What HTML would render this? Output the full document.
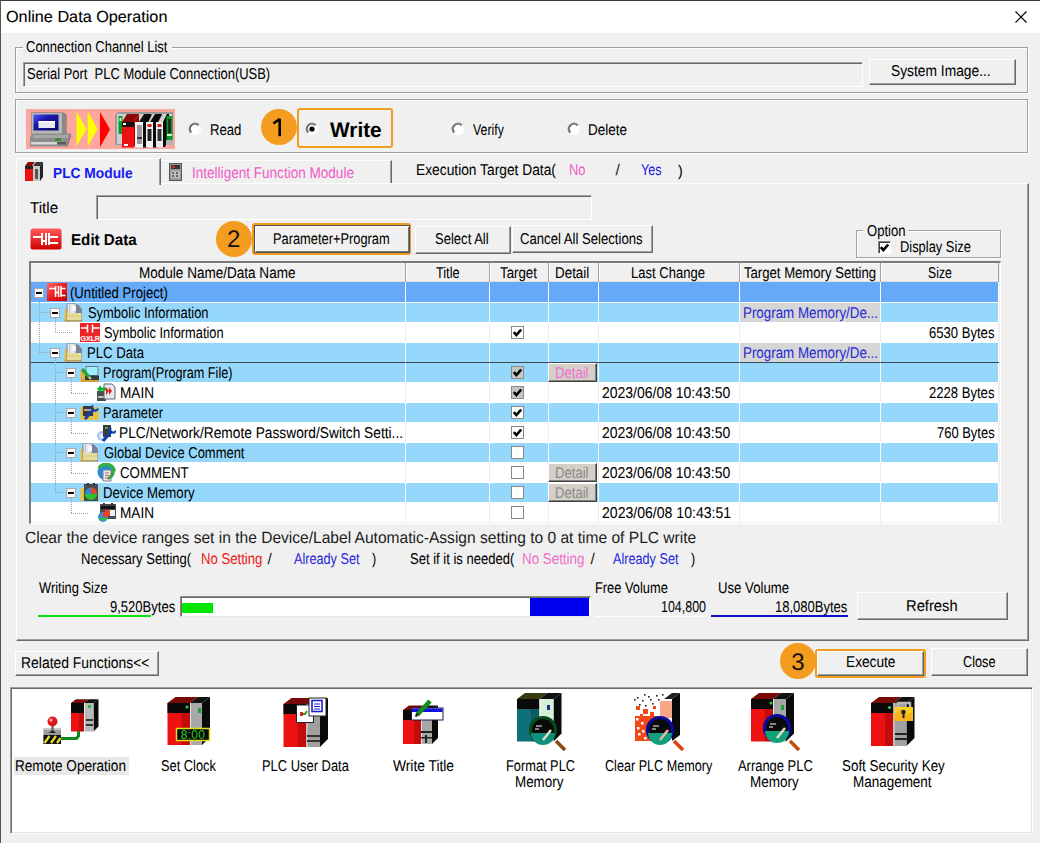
<!DOCTYPE html>
<html><head><meta charset="utf-8">
<style>
*{box-sizing:border-box;margin:0;padding:0}
html,body{width:1040px;height:843px;overflow:hidden;background:#f0f0f0;font-family:"Liberation Sans",sans-serif;color:#000;position:relative}
.a{position:absolute}
.t{position:absolute;white-space:nowrap;text-rendering:geometricPrecision;-webkit-text-stroke:0.05px currentColor}
.grp{position:absolute;border:1px solid #a0a0a0;box-shadow:inset 1px 1px 0 #fff,1px 1px 0 #fff}
.btn{position:absolute;background:#f0f0f0;border-top:1px solid #fff;border-left:1px solid #fff;border-right:1px solid #696969;border-bottom:1px solid #696969;box-shadow:inset -1px -1px 0 #a0a0a0}
.defbtn{position:absolute;background:#f0f0f0;border:1px solid #4a4e55;box-shadow:inset 1px 1px 0 #fff,inset -1px -1px 0 #7a7a7a}
.sunk{position:absolute;border-top:1px solid #a0a0a0;border-left:1px solid #a0a0a0;border-right:1px solid #fff;border-bottom:1px solid #fff;box-shadow:inset 1px 1px 0 #696969}
.circ{position:absolute;width:36px;height:36px;border-radius:50%;background:#f39c1f}
.radio{position:absolute;width:13px;height:13px}
.cb{position:absolute;width:13px;height:13px;border:1px solid #8f8f8f;background:#fff}
.row{position:absolute;left:31px;width:968px;height:20px}
.vl{position:absolute;width:1px}
.dv{position:absolute;width:1px;background-image:linear-gradient(#a0a0a0 50%,transparent 50%);background-size:1px 2px}
.dh{position:absolute;height:1px;background-image:linear-gradient(90deg,#a0a0a0 50%,transparent 50%);background-size:2px 1px}
.mb{position:absolute;width:10px;height:10px;border:1px solid #a8a8a8;background:#fff}
.mb:after{content:"";position:absolute;left:1px;top:3px;width:6px;height:2px;background:#000}
.det{position:absolute;width:48px;height:18px;background:#d4d0c8;border-top:1px solid #fff;border-left:1px solid #fff;border-right:1px solid #404040;border-bottom:1px solid #404040;box-shadow:inset -1px -1px 0 #808080}
</style></head><body>
<div class="a" style="left:0;top:0;width:1040px;height:33px;background:#fff"></div>
<div class="a" style="left:0;top:0;width:1040px;height:1px;background:#3a3a3a"></div>
<div class="a" style="left:0;top:0;width:1px;height:843px;background:#555"></div>
<div class="t" style="left:6.00px;top:9.66px;font-size:16px;line-height:16px;color:#000;transform:scaleX(1.0139);transform-origin:0 0;-webkit-text-stroke:0.1px currentColor;">Online Data Operation</div>
<svg class="a" style="left:1014px;top:10px" width="14" height="14"><path d="M1.5 1.5L12.5 12.5M12.5 1.5L1.5 12.5" stroke="#000" stroke-width="1.2"/></svg>
<div class="grp" style="left:15px;top:47px;width:1013px;height:46px"></div>
<div class="a" style="left:23px;top:40px;width:149px;height:14px;background:#f0f0f0"></div>
<div class="t" style="left:26.00px;top:40.49px;font-size:15.6px;line-height:15.6px;color:#000;transform:scaleX(0.8325);transform-origin:0 0;">Connection Channel List</div>
<div class="sunk" style="left:23px;top:62px;width:840px;height:25px"></div>
<div class="t" style="left:27.00px;top:67.09px;font-size:15.6px;line-height:15.6px;color:#000;transform:scaleX(0.8301);transform-origin:0 0;">Serial Port&nbsp; PLC Module Connection(USB)</div>
<div class="btn" style="left:869px;top:59px;width:147px;height:26px"></div>
<div class="t" style="left:891.45px;top:64.49px;font-size:15.6px;line-height:15.6px;color:#000;transform:scaleX(0.8848);transform-origin:0 0;">System Image...</div>
<div class="grp" style="left:15px;top:99px;width:1013px;height:54px"></div>
<svg class="a" style="left:26px;top:109px" width="149" height="40" viewBox="0 0 149 40">
<defs><linearGradient id="scr" x1="0" y1="0" x2="1" y2="1"><stop offset="0" stop-color="#5a5aff"/><stop offset="0.35" stop-color="#1a1ab0"/><stop offset="1" stop-color="#0a0a60"/></linearGradient></defs>
<rect x="0" y="0" width="149" height="40" fill="#fba69e"/>
<path d="M5.5 3.5h31l4 2v20h-35z" fill="#6a6a6a"/>
<path d="M6 4h30v21h-30z" fill="#b8b8b8"/><path d="M36 4l4 2v19h-4z" fill="#8a8a8a"/>
<path d="M7.5 5.5h25v16h-25z" fill="url(#scr)"/>
<path d="M12.5 12h16.5v7h-16.5z" fill="#e8e8f0"/><path d="M12.5 12h16.5v1.5h-16.5z" fill="#fff"/>
<path d="M4 28l3-3.5h38l-4 13h-37z" fill="#8c8c8c"/>
<path d="M7 26h36l-1 3h-35z" fill="#a8a8a8"/>
<path d="M41 37.5l4-13v2l-3.5 11z" fill="#4a4a4a"/>
<path d="M5 33h26v2.5h-26z" fill="#d8d8d8"/><path d="M31 33h9v2.5h-9z" fill="#5a5a5a"/>
<path d="M29 29h6v3h-6z" fill="#3a8a3a"/>
<path d="M50.5 2.5l10 17.5l-10 17.5z" fill="#ffff00"/>
<path d="M61.7 2.5l10 17.5l-10 17.5z" fill="#ffff00"/>
<path d="M74 3l10 17.5l-10 17.5z" fill="#ff0000"/>
<path d="M89 6l3-3h55v33h-58z" fill="#9a9a9a"/><path d="M91 5h55v30h-55z" fill="#d0d0d0"/>
<path d="M92.5 7h4v18h-4z" fill="#0a9a2a"/><path d="M93.5 9h2v3h-2z" fill="#c0ffc0"/>
<path d="M96 13l5-8h12l-5 8z" fill="#8a0a0a"/>
<path d="M96 13h12v25.5h-12z" fill="#ee1111"/><path d="M96 13h12v5h-12z" fill="#111"/><path d="M97 14h3v2h-3z" fill="#fff"/>
<path d="M98 35h4v2h-4z" fill="#fff"/>
<path d="M108 13l5-8v25l-5 8z" fill="#a00000"/>
<path d="M109 13h8v25.5h-8z" fill="#f4f4f4"/><path d="M111 16h5v19h-5z" fill="#9a9a9a"/><path d="M111 28h5v2h-5z" fill="#333"/>
<path d="M113 13l5-8h7l-5 8z" fill="#111"/>
<path d="M117 38.5v-25l4-8h5l-4 8v25z" fill="#0a0a0a"/>
<path d="M120 13h7v25.5h-7z" fill="#f0f0f0"/><path d="M121.5 15h4v3h-4z" fill="#d02020"/><path d="M121.5 20h4v12h-4z" fill="#222"/>
<path d="M124 13l5-8h7l-5 8z" fill="#111"/>
<path d="M127 38.5v-25l4-8h5l-4 8v25z" fill="#0a0a0a"/>
<path d="M130 13h7v25.5h-7z" fill="#ececec"/><path d="M131.5 15h4v3h-4z" fill="#d02020"/><path d="M131.5 20h4v12h-4z" fill="#333"/>
<path d="M137 38v-25l4-8h2v25l-4 8z" fill="#0a0a0a"/>
<path d="M140.5 7h6v24h-6z" fill="#0a9a2a"/><path d="M142 10h3v14h-3z" fill="#2a2a2a"/><path d="M141 25h5v2h-5z" fill="#c0ffc0"/>
<path d="M140 31h7v5h-7z" fill="#b0b0b0"/>
</svg>
<svg class="a" style="left:188px;top:122px" width="14" height="14" viewBox="0 0 14 14"><circle cx="7" cy="7" r="6" fill="#fff"/><path d="M2.9 11.1A5.8 5.8 0 0 1 11.1 2.9" stroke="#8a8a8a" stroke-width="1.4" fill="none"/><path d="M3.6 10.2A4.6 4.6 0 0 1 10.2 3.6" stroke="#505050" stroke-width="1.1" fill="none"/></svg>
<div class="t" style="left:210.16px;top:122.59px;font-size:15.6px;line-height:15.6px;color:#000;transform:scaleX(0.8425);transform-origin:0 0;">Read</div>
<div class="circ" style="left:261px;top:109px"></div>
<svg class="a" style="left:270px;top:115px" width="20" height="25" viewBox="270 115 20 25"><path d="M279.7 118.8V136.2" stroke="#000" stroke-width="2.6"/><path d="M273.4 123.4L279.7 119" stroke="#000" stroke-width="2.4"/></svg>
<div class="a" style="left:297px;top:108px;width:96px;height:40px;border:2px solid #f39c1f;border-radius:3px"></div>
<svg class="a" style="left:305px;top:122px" width="14" height="14" viewBox="0 0 14 14"><circle cx="7" cy="7" r="6" fill="#fff"/><path d="M2.9 11.1A5.8 5.8 0 0 1 11.1 2.9" stroke="#8a8a8a" stroke-width="1.4" fill="none"/><path d="M3.6 10.2A4.6 4.6 0 0 1 10.2 3.6" stroke="#505050" stroke-width="1.1" fill="none"/><circle cx="7" cy="7" r="2.6" fill="#000"/></svg>
<div class="t" style="left:330.00px;top:120.22px;font-size:21px;line-height:21px;color:#000;font-weight:bold;transform:scaleX(0.9914);transform-origin:0 0;">Write</div>
<svg class="a" style="left:451px;top:122px" width="14" height="14" viewBox="0 0 14 14"><circle cx="7" cy="7" r="6" fill="#fff"/><path d="M2.9 11.1A5.8 5.8 0 0 1 11.1 2.9" stroke="#8a8a8a" stroke-width="1.4" fill="none"/><path d="M3.6 10.2A4.6 4.6 0 0 1 10.2 3.6" stroke="#505050" stroke-width="1.1" fill="none"/></svg>
<div class="t" style="left:472.50px;top:122.99px;font-size:15.6px;line-height:15.6px;color:#000;transform:scaleX(0.7908);transform-origin:0 0;">Verify</div>
<svg class="a" style="left:567px;top:122px" width="14" height="14" viewBox="0 0 14 14"><circle cx="7" cy="7" r="6" fill="#fff"/><path d="M2.9 11.1A5.8 5.8 0 0 1 11.1 2.9" stroke="#8a8a8a" stroke-width="1.4" fill="none"/><path d="M3.6 10.2A4.6 4.6 0 0 1 10.2 3.6" stroke="#505050" stroke-width="1.1" fill="none"/></svg>
<div class="t" style="left:588.14px;top:122.99px;font-size:15.6px;line-height:15.6px;color:#000;transform:scaleX(0.8640);transform-origin:0 0;">Delete</div>
<div class="a" style="left:16px;top:183px;width:1013px;height:458px;border-top:1px solid #fff;border-left:1px solid #fff;border-right:1px solid #696969;border-bottom:1px solid #696969;box-shadow:inset -1px -1px 0 #a0a0a0"></div>
<div class="a" style="left:16px;top:158px;width:145px;height:27px;background:#f0f0f0;border-top:1px solid #fff;border-left:1px solid #fff;border-right:1px solid #696969;box-shadow:inset -1px 0 0 #a0a0a0"></div>
<div class="a" style="left:161px;top:160px;width:231px;height:23px;background:#f0f0f0;border-top:1px solid #fff;border-right:1px solid #696969;box-shadow:inset -1px 0 0 #a0a0a0"></div>
<svg class="a" style="left:24px;top:161px" width="20" height="21" viewBox="0 0 20 21">
<path d="M1 5l3-4h7l-3 4z" fill="#8a0a0a"/><path d="M1 5h8v15h-8z" fill="#ee1111"/><path d="M1 5h8v3h-8z" fill="#222"/>
<path d="M9 5l3-4h7l-3 4z" fill="#333"/><path d="M9 5h8v15h-8z" fill="#c8c8c8"/><path d="M16 5l3-4v15l-3 4z" fill="#222"/>
<path d="M11 8h3v10h-3z" fill="#555"/>
</svg>
<div class="t" style="left:53.00px;top:166.63px;font-size:14.5px;line-height:14.5px;color:#1a1aee;font-weight:bold;transform:scaleX(0.9497);transform-origin:0 0;">PLC Module</div>
<svg class="a" style="left:168px;top:162px" width="16" height="20" viewBox="0 0 16 20">
<path d="M1 1h13v18h-13z" fill="#555"/><path d="M2 2h11v16h-11z" fill="#9a9a9a"/><path d="M3 3h9v4h-9z" fill="#333"/><path d="M4 4h3v2h-3z" fill="#c03030"/>
<path d="M3 9h9v7h-9z" fill="#bdbdbd"/><path d="M4 10h2v2h-2zM8 10h2v2h-2zM4 13h2v2h-2zM8 13h2v2h-2z" fill="#666"/>
</svg>
<div class="t" style="left:192.13px;top:166.49px;font-size:15.6px;line-height:15.6px;color:#f060c8;transform:scaleX(0.8690);transform-origin:0 0;">Intelligent Function Module</div>
<div class="t" style="left:416.12px;top:163.39px;font-size:15.6px;line-height:15.6px;color:#000;transform:scaleX(0.8837);transform-origin:0 0;">Execution Target Data(</div>
<div class="t" style="left:569.17px;top:163.39px;font-size:15.6px;line-height:15.6px;color:#f060c8;transform:scaleX(0.8307);transform-origin:0 0;">No</div>
<div class="t" style="left:615.50px;top:163.39px;font-size:15.6px;line-height:15.6px;color:#222;-webkit-text-stroke:0;">/</div>
<div class="t" style="left:640.70px;top:162.79px;font-size:15.6px;line-height:15.6px;color:#2020e0;transform:scaleX(0.8034);transform-origin:0 0;">Yes</div>
<div class="t" style="left:678.00px;top:163.79px;font-size:15.6px;line-height:15.6px;color:#000;transform:scaleX(0.9000);transform-origin:0 0;">)</div>
<div class="t" style="left:30.00px;top:200.74px;font-size:15.6px;line-height:15.6px;color:#000;transform:scaleX(0.9749);transform-origin:0 0;">Title</div>
<div class="sunk" style="left:96px;top:195px;width:496px;height:25px"></div>
<svg class="a" style="left:30px;top:228px" width="32" height="22" viewBox="0 0 32 22">
<defs><linearGradient id="eg" x1="0" y1="0" x2="0" y2="1"><stop offset="0" stop-color="#ff5a5a"/><stop offset="1" stop-color="#d00000"/></linearGradient></defs>
<rect x="0.5" y="0.5" width="31" height="21" rx="2.5" fill="url(#eg)"/>
<path d="M3 9h9M12 5v12M12 13h4M16 5v12M19 5v12M19 9h9M19 15h9" stroke="#fff" stroke-width="2" fill="none"/>
</svg>
<div class="t" style="left:71.04px;top:233.33px;font-size:15.8px;line-height:15.8px;color:#000;font-weight:bold;transform:scaleX(0.9604);transform-origin:0 0;">Edit Data</div>
<div class="circ" style="left:216px;top:221px"></div>
<div class="t" style="left:227.00px;top:228.38px;font-size:24px;line-height:24px;color:#111;-webkit-text-stroke:0;">2</div>
<div class="a" style="left:252px;top:223px;width:159px;height:32px;border:2px solid #f39c1f;border-radius:3px"></div>
<div class="defbtn" style="left:254px;top:225px;width:156px;height:28px"></div>
<div class="t" style="left:273.18px;top:232.19px;font-size:15.6px;line-height:15.6px;color:#000;transform:scaleX(0.8231);transform-origin:0 0;">Parameter+Program</div>
<div class="btn" style="left:415px;top:226px;width:96px;height:28px"></div>
<div class="t" style="left:435.00px;top:232.19px;font-size:15.6px;line-height:15.6px;color:#000;transform:scaleX(0.8367);transform-origin:0 0;">Select All</div>
<div class="btn" style="left:512px;top:225px;width:141px;height:28px"></div>
<div class="t" style="left:520.25px;top:232.19px;font-size:15.6px;line-height:15.6px;color:#000;transform:scaleX(0.8419);transform-origin:0 0;">Cancel All Selections</div>
<div class="grp" style="left:856px;top:230px;width:145px;height:28px"></div>
<div class="a" style="left:863px;top:223px;width:45px;height:14px;background:#f0f0f0"></div>
<div class="t" style="left:866.50px;top:224.49px;font-size:15.6px;line-height:15.6px;color:#000;transform:scaleX(0.8394);transform-origin:0 0;">Option</div>
<div class="a" style="left:878px;top:241px;width:13px;height:13px;background:#fff;border-top:1px solid #808080;border-left:1px solid #808080;border-right:1px solid #fff;border-bottom:1px solid #fff;box-shadow:inset 1px 1px 0 #404040"></div>
<svg class="a" style="left:878px;top:241px" width="13" height="13" viewBox="0 0 13 13"><path d="M2.8 6.2l2.6 2.9l4.8-5.6" stroke="#000" stroke-width="2.6" fill="none"/></svg>
<div class="t" style="left:899.67px;top:240.09px;font-size:15.6px;line-height:15.6px;color:#000;transform:scaleX(0.8262);transform-origin:0 0;">Display Size</div>
<div class="a" style="left:29px;top:261px;width:972px;height:263px;background:#fff;border-top:2px solid #7a7a7a;border-left:2px solid #7a7a7a;border-right:1px solid #fff;border-bottom:1px solid #fff;box-shadow:inset -1px -1px 0 #f0f0f0"></div>
<div class="a" style="left:31px;top:263px;width:969px;height:19px;background:#f0f0f0;border-top:1px solid #f8f8f8;border-bottom:1px solid #e6e0d8"></div><div class="a" style="left:998px;top:263px;width:1px;height:19px;background:#a0a0a0"></div>
<div class="a" style="left:405px;top:263px;width:1px;height:19px;background:#a0a0a0"></div><div class="a" style="left:406px;top:263px;width:1px;height:18px;background:#fff"></div>
<div class="a" style="left:489px;top:263px;width:1px;height:19px;background:#a0a0a0"></div><div class="a" style="left:490px;top:263px;width:1px;height:18px;background:#fff"></div>
<div class="a" style="left:548px;top:263px;width:1px;height:19px;background:#a0a0a0"></div><div class="a" style="left:549px;top:263px;width:1px;height:18px;background:#fff"></div>
<div class="a" style="left:598px;top:263px;width:1px;height:19px;background:#a0a0a0"></div><div class="a" style="left:599px;top:263px;width:1px;height:18px;background:#fff"></div>
<div class="a" style="left:739px;top:263px;width:1px;height:19px;background:#a0a0a0"></div><div class="a" style="left:740px;top:263px;width:1px;height:18px;background:#fff"></div>
<div class="a" style="left:880px;top:263px;width:1px;height:19px;background:#a0a0a0"></div><div class="a" style="left:881px;top:263px;width:1px;height:18px;background:#fff"></div>
<div class="t" style="left:139.13px;top:265.99px;font-size:15.6px;line-height:15.6px;color:#000;transform:scaleX(0.8679);transform-origin:0 0;">Module Name/Data Name</div>
<div class="t" style="left:436.00px;top:265.99px;font-size:15.6px;line-height:15.6px;color:#000;transform:scaleX(0.8154);transform-origin:0 0;">Title</div>
<div class="t" style="left:500.00px;top:265.99px;font-size:15.6px;line-height:15.6px;color:#000;transform:scaleX(0.8521);transform-origin:0 0;">Target</div>
<div class="t" style="left:555.14px;top:265.99px;font-size:15.6px;line-height:15.6px;color:#000;transform:scaleX(0.8593);transform-origin:0 0;">Detail</div>
<div class="t" style="left:631.16px;top:265.99px;font-size:15.6px;line-height:15.6px;color:#000;transform:scaleX(0.8357);transform-origin:0 0;">Last Change</div>
<div class="t" style="left:744.00px;top:265.99px;font-size:15.6px;line-height:15.6px;color:#000;transform:scaleX(0.8419);transform-origin:0 0;">Target Memory Setting</div>
<div class="t" style="left:927.70px;top:265.99px;font-size:15.6px;line-height:15.6px;color:#000;transform:scaleX(0.7855);transform-origin:0 0;">Size</div>
<div class="a" style="left:31px;top:282px;width:968px;height:20px;background:#64aaf8"></div>
<div class="a" style="left:405px;top:282px;width:1px;height:20px;background:#fff"></div>
<div class="a" style="left:489px;top:282px;width:1px;height:20px;background:#fff"></div>
<div class="a" style="left:548px;top:282px;width:1px;height:20px;background:#fff"></div>
<div class="a" style="left:598px;top:282px;width:1px;height:20px;background:#fff"></div>
<div class="a" style="left:739px;top:282px;width:1px;height:20px;background:#fff"></div>
<div class="a" style="left:880px;top:282px;width:1px;height:20px;background:#fff"></div>
<div class="a" style="left:998px;top:282px;width:1px;height:20px;background:#fff"></div>
<div class="a" style="left:31px;top:302px;width:968px;height:20px;background:#96d8fb"></div>
<div class="a" style="left:31px;top:302px;width:968px;height:1px;background:#fff"></div>
<div class="a" style="left:405px;top:302px;width:1px;height:20px;background:#fff"></div>
<div class="a" style="left:489px;top:302px;width:1px;height:20px;background:#fff"></div>
<div class="a" style="left:548px;top:302px;width:1px;height:20px;background:#fff"></div>
<div class="a" style="left:598px;top:302px;width:1px;height:20px;background:#fff"></div>
<div class="a" style="left:739px;top:302px;width:1px;height:20px;background:#fff"></div>
<div class="a" style="left:880px;top:302px;width:1px;height:20px;background:#fff"></div>
<div class="a" style="left:998px;top:302px;width:1px;height:20px;background:#fff"></div>
<div class="a" style="left:31px;top:322px;width:968px;height:20px;background:#fff"></div>
<div class="a" style="left:31px;top:322px;width:968px;height:1px;background:#fff"></div>
<div class="a" style="left:405px;top:322px;width:1px;height:20px;background:#ececec"></div>
<div class="a" style="left:489px;top:322px;width:1px;height:20px;background:#ececec"></div>
<div class="a" style="left:548px;top:322px;width:1px;height:20px;background:#ececec"></div>
<div class="a" style="left:598px;top:322px;width:1px;height:20px;background:#ececec"></div>
<div class="a" style="left:739px;top:322px;width:1px;height:20px;background:#ececec"></div>
<div class="a" style="left:880px;top:322px;width:1px;height:20px;background:#ececec"></div>
<div class="a" style="left:998px;top:322px;width:1px;height:20px;background:#ececec"></div>
<div class="a" style="left:31px;top:342px;width:968px;height:20px;background:#96d8fb"></div>
<div class="a" style="left:31px;top:342px;width:968px;height:1px;background:#fff"></div>
<div class="a" style="left:405px;top:342px;width:1px;height:20px;background:#fff"></div>
<div class="a" style="left:489px;top:342px;width:1px;height:20px;background:#fff"></div>
<div class="a" style="left:548px;top:342px;width:1px;height:20px;background:#fff"></div>
<div class="a" style="left:598px;top:342px;width:1px;height:20px;background:#fff"></div>
<div class="a" style="left:739px;top:342px;width:1px;height:20px;background:#fff"></div>
<div class="a" style="left:880px;top:342px;width:1px;height:20px;background:#fff"></div>
<div class="a" style="left:998px;top:342px;width:1px;height:20px;background:#fff"></div>
<div class="a" style="left:31px;top:362px;width:968px;height:20px;background:#96d8fb"></div>
<div class="a" style="left:31px;top:362px;width:968px;height:1px;background:#fff"></div>
<div class="a" style="left:405px;top:362px;width:1px;height:20px;background:#fff"></div>
<div class="a" style="left:489px;top:362px;width:1px;height:20px;background:#fff"></div>
<div class="a" style="left:548px;top:362px;width:1px;height:20px;background:#fff"></div>
<div class="a" style="left:598px;top:362px;width:1px;height:20px;background:#fff"></div>
<div class="a" style="left:739px;top:362px;width:1px;height:20px;background:#fff"></div>
<div class="a" style="left:880px;top:362px;width:1px;height:20px;background:#fff"></div>
<div class="a" style="left:998px;top:362px;width:1px;height:20px;background:#fff"></div>
<div class="a" style="left:31px;top:382px;width:968px;height:20px;background:#fff"></div>
<div class="a" style="left:31px;top:382px;width:968px;height:1px;background:#fff"></div>
<div class="a" style="left:405px;top:382px;width:1px;height:20px;background:#ececec"></div>
<div class="a" style="left:489px;top:382px;width:1px;height:20px;background:#ececec"></div>
<div class="a" style="left:548px;top:382px;width:1px;height:20px;background:#ececec"></div>
<div class="a" style="left:598px;top:382px;width:1px;height:20px;background:#ececec"></div>
<div class="a" style="left:739px;top:382px;width:1px;height:20px;background:#ececec"></div>
<div class="a" style="left:880px;top:382px;width:1px;height:20px;background:#ececec"></div>
<div class="a" style="left:998px;top:382px;width:1px;height:20px;background:#ececec"></div>
<div class="a" style="left:31px;top:402px;width:968px;height:20px;background:#96d8fb"></div>
<div class="a" style="left:31px;top:402px;width:968px;height:1px;background:#fff"></div>
<div class="a" style="left:405px;top:402px;width:1px;height:20px;background:#fff"></div>
<div class="a" style="left:489px;top:402px;width:1px;height:20px;background:#fff"></div>
<div class="a" style="left:548px;top:402px;width:1px;height:20px;background:#fff"></div>
<div class="a" style="left:598px;top:402px;width:1px;height:20px;background:#fff"></div>
<div class="a" style="left:739px;top:402px;width:1px;height:20px;background:#fff"></div>
<div class="a" style="left:880px;top:402px;width:1px;height:20px;background:#fff"></div>
<div class="a" style="left:998px;top:402px;width:1px;height:20px;background:#fff"></div>
<div class="a" style="left:31px;top:422px;width:968px;height:20px;background:#fff"></div>
<div class="a" style="left:31px;top:422px;width:968px;height:1px;background:#fff"></div>
<div class="a" style="left:405px;top:422px;width:1px;height:20px;background:#ececec"></div>
<div class="a" style="left:489px;top:422px;width:1px;height:20px;background:#ececec"></div>
<div class="a" style="left:548px;top:422px;width:1px;height:20px;background:#ececec"></div>
<div class="a" style="left:598px;top:422px;width:1px;height:20px;background:#ececec"></div>
<div class="a" style="left:739px;top:422px;width:1px;height:20px;background:#ececec"></div>
<div class="a" style="left:880px;top:422px;width:1px;height:20px;background:#ececec"></div>
<div class="a" style="left:998px;top:422px;width:1px;height:20px;background:#ececec"></div>
<div class="a" style="left:31px;top:442px;width:968px;height:20px;background:#96d8fb"></div>
<div class="a" style="left:31px;top:442px;width:968px;height:1px;background:#fff"></div>
<div class="a" style="left:405px;top:442px;width:1px;height:20px;background:#fff"></div>
<div class="a" style="left:489px;top:442px;width:1px;height:20px;background:#fff"></div>
<div class="a" style="left:548px;top:442px;width:1px;height:20px;background:#fff"></div>
<div class="a" style="left:598px;top:442px;width:1px;height:20px;background:#fff"></div>
<div class="a" style="left:739px;top:442px;width:1px;height:20px;background:#fff"></div>
<div class="a" style="left:880px;top:442px;width:1px;height:20px;background:#fff"></div>
<div class="a" style="left:998px;top:442px;width:1px;height:20px;background:#fff"></div>
<div class="a" style="left:31px;top:462px;width:968px;height:20px;background:#fff"></div>
<div class="a" style="left:31px;top:462px;width:968px;height:1px;background:#fff"></div>
<div class="a" style="left:405px;top:462px;width:1px;height:20px;background:#ececec"></div>
<div class="a" style="left:489px;top:462px;width:1px;height:20px;background:#ececec"></div>
<div class="a" style="left:548px;top:462px;width:1px;height:20px;background:#ececec"></div>
<div class="a" style="left:598px;top:462px;width:1px;height:20px;background:#ececec"></div>
<div class="a" style="left:739px;top:462px;width:1px;height:20px;background:#ececec"></div>
<div class="a" style="left:880px;top:462px;width:1px;height:20px;background:#ececec"></div>
<div class="a" style="left:998px;top:462px;width:1px;height:20px;background:#ececec"></div>
<div class="a" style="left:31px;top:482px;width:968px;height:20px;background:#96d8fb"></div>
<div class="a" style="left:31px;top:482px;width:968px;height:1px;background:#fff"></div>
<div class="a" style="left:405px;top:482px;width:1px;height:20px;background:#fff"></div>
<div class="a" style="left:489px;top:482px;width:1px;height:20px;background:#fff"></div>
<div class="a" style="left:548px;top:482px;width:1px;height:20px;background:#fff"></div>
<div class="a" style="left:598px;top:482px;width:1px;height:20px;background:#fff"></div>
<div class="a" style="left:739px;top:482px;width:1px;height:20px;background:#fff"></div>
<div class="a" style="left:880px;top:482px;width:1px;height:20px;background:#fff"></div>
<div class="a" style="left:998px;top:482px;width:1px;height:20px;background:#fff"></div>
<div class="a" style="left:31px;top:502px;width:968px;height:20px;background:#fff"></div>
<div class="a" style="left:31px;top:502px;width:968px;height:1px;background:#fff"></div>
<div class="a" style="left:405px;top:502px;width:1px;height:20px;background:#ececec"></div>
<div class="a" style="left:489px;top:502px;width:1px;height:20px;background:#ececec"></div>
<div class="a" style="left:548px;top:502px;width:1px;height:20px;background:#ececec"></div>
<div class="a" style="left:598px;top:502px;width:1px;height:20px;background:#ececec"></div>
<div class="a" style="left:739px;top:502px;width:1px;height:20px;background:#ececec"></div>
<div class="a" style="left:880px;top:502px;width:1px;height:20px;background:#ececec"></div>
<div class="a" style="left:998px;top:502px;width:1px;height:20px;background:#ececec"></div>
<div class="a" style="left:31px;top:362px;width:968px;height:1px;background:#3c4a55"></div>
<div class="a" style="left:740px;top:303px;width:140px;height:19px;background:#d6d6d6"></div>
<div class="a" style="left:740px;top:343px;width:140px;height:19px;background:#d6d6d6"></div>
<div class="dv" style="left:39px;top:298px;height:55px"></div>
<div class="dh" style="left:39px;top:312px;width:11px"></div>
<div class="dh" style="left:39px;top:352px;width:11px"></div>
<div class="dv" style="left:55px;top:318px;height:14px"></div>
<div class="dh" style="left:55px;top:332px;width:17px"></div>
<div class="dv" style="left:55px;top:358px;height:135px"></div>
<div class="dh" style="left:55px;top:372px;width:11px"></div>
<div class="dh" style="left:55px;top:412px;width:11px"></div>
<div class="dh" style="left:55px;top:452px;width:11px"></div>
<div class="dh" style="left:55px;top:492px;width:11px"></div>
<div class="dv" style="left:71px;top:378px;height:15px"></div>
<div class="dh" style="left:71px;top:393px;width:17px"></div>
<div class="dv" style="left:71px;top:418px;height:15px"></div>
<div class="dh" style="left:71px;top:433px;width:17px"></div>
<div class="dv" style="left:71px;top:458px;height:15px"></div>
<div class="dh" style="left:71px;top:473px;width:17px"></div>
<div class="dv" style="left:71px;top:498px;height:15px"></div>
<div class="dh" style="left:71px;top:513px;width:17px"></div>
<div class="mb" style="left:34px;top:288px"></div>
<div class="mb" style="left:50px;top:308px"></div>
<div class="mb" style="left:50px;top:348px"></div>
<div class="mb" style="left:66px;top:368px"></div>
<div class="mb" style="left:66px;top:408px"></div>
<div class="mb" style="left:66px;top:448px"></div>
<div class="mb" style="left:66px;top:488px"></div>
<div class="t" style="left:70.40px;top:285.59px;font-size:15.6px;line-height:15.6px;color:#000;transform:scaleX(0.8419);transform-origin:0 0;">(Untitled Project)</div>
<div class="t" style="left:87.50px;top:305.59px;font-size:15.6px;line-height:15.6px;color:#000;transform:scaleX(0.8280);transform-origin:0 0;">Symbolic Information</div>
<div class="t" style="left:104.00px;top:325.59px;font-size:15.6px;line-height:15.6px;color:#000;transform:scaleX(0.8211);transform-origin:0 0;">Symbolic Information</div>
<div class="t" style="left:86.66px;top:345.59px;font-size:15.6px;line-height:15.6px;color:#000;transform:scaleX(0.8441);transform-origin:0 0;">PLC Data</div>
<div class="t" style="left:103.19px;top:365.59px;font-size:15.6px;line-height:15.6px;color:#000;transform:scaleX(0.8121);transform-origin:0 0;">Program(Program File)</div>
<div class="t" style="left:119.53px;top:385.59px;font-size:15.6px;line-height:15.6px;color:#000;transform:scaleX(0.8714);transform-origin:0 0;">MAIN</div>
<div class="t" style="left:103.18px;top:405.59px;font-size:15.6px;line-height:15.6px;color:#000;transform:scaleX(0.8240);transform-origin:0 0;">Parameter</div>
<div class="t" style="left:118.62px;top:425.59px;font-size:15.6px;line-height:15.6px;color:#000;transform:scaleX(0.8811);transform-origin:0 0;">PLC/Network/Remote Password/Switch Setti...</div>
<div class="t" style="left:104.00px;top:445.59px;font-size:15.6px;line-height:15.6px;color:#000;transform:scaleX(0.8311);transform-origin:0 0;">Global Device Comment</div>
<div class="t" style="left:119.50px;top:465.59px;font-size:15.6px;line-height:15.6px;color:#000;transform:scaleX(0.8515);transform-origin:0 0;">COMMENT</div>
<div class="t" style="left:103.15px;top:485.59px;font-size:15.6px;line-height:15.6px;color:#000;transform:scaleX(0.8464);transform-origin:0 0;">Device Memory</div>
<div class="t" style="left:119.53px;top:505.59px;font-size:15.6px;line-height:15.6px;color:#000;transform:scaleX(0.8714);transform-origin:0 0;">MAIN</div>
<div class="t" style="left:743.14px;top:305.59px;font-size:15.6px;line-height:15.6px;color:#2a2ad8;transform:scaleX(0.8560);transform-origin:0 0;">Program Memory/De...</div>
<div class="t" style="left:743.14px;top:345.59px;font-size:15.6px;line-height:15.6px;color:#2a2ad8;transform:scaleX(0.8560);transform-origin:0 0;">Program Memory/De...</div>
<div class="t" style="left:929.20px;top:325.59px;font-size:15.6px;line-height:15.6px;color:#000;transform:scaleX(0.8386);transform-origin:0 0;">6530 Bytes</div>
<div class="t" style="left:929.20px;top:385.59px;font-size:15.6px;line-height:15.6px;color:#000;transform:scaleX(0.8386);transform-origin:0 0;">2228 Bytes</div>
<div class="t" style="left:937.00px;top:425.59px;font-size:15.6px;line-height:15.6px;color:#000;transform:scaleX(0.8310);transform-origin:0 0;">760 Bytes</div>
<div class="t" style="left:602.30px;top:385.59px;font-size:15.6px;line-height:15.6px;color:#000;transform:scaleX(0.8961);transform-origin:0 0;">2023/06/08 10:43:50</div>
<div class="t" style="left:602.30px;top:425.59px;font-size:15.6px;line-height:15.6px;color:#000;transform:scaleX(0.8961);transform-origin:0 0;">2023/06/08 10:43:50</div>
<div class="t" style="left:602.30px;top:465.59px;font-size:15.6px;line-height:15.6px;color:#000;transform:scaleX(0.8961);transform-origin:0 0;">2023/06/08 10:43:50</div>
<div class="t" style="left:602.30px;top:505.59px;font-size:15.6px;line-height:15.6px;color:#000;transform:scaleX(0.9024);transform-origin:0 0;">2023/06/08 10:43:51</div>
<svg class="a" style="left:511px;top:326px" width="13" height="13" viewBox="0 0 13 13"><rect x="0.5" y="0.5" width="12" height="12" fill="#fff" stroke="#8a8a8a"/><path d="M2.8 6.2l2.6 2.9l4.8-5.6" stroke="#000" stroke-width="2.6" fill="none"/></svg>
<svg class="a" style="left:511px;top:366px" width="13" height="13" viewBox="0 0 13 13"><rect x="0.5" y="0.5" width="12" height="12" fill="#c6c6c6" stroke="#8a8a8a"/><path d="M2.8 6.2l2.6 2.9l4.8-5.6" stroke="#000" stroke-width="2.6" fill="none"/></svg>
<svg class="a" style="left:511px;top:386px" width="13" height="13" viewBox="0 0 13 13"><rect x="0.5" y="0.5" width="12" height="12" fill="#c6c6c6" stroke="#8a8a8a"/><path d="M2.8 6.2l2.6 2.9l4.8-5.6" stroke="#000" stroke-width="2.6" fill="none"/></svg>
<svg class="a" style="left:511px;top:406px" width="13" height="13" viewBox="0 0 13 13"><rect x="0.5" y="0.5" width="12" height="12" fill="#fff" stroke="#8a8a8a"/><path d="M2.8 6.2l2.6 2.9l4.8-5.6" stroke="#000" stroke-width="2.6" fill="none"/></svg>
<svg class="a" style="left:511px;top:426px" width="13" height="13" viewBox="0 0 13 13"><rect x="0.5" y="0.5" width="12" height="12" fill="#fff" stroke="#8a8a8a"/><path d="M2.8 6.2l2.6 2.9l4.8-5.6" stroke="#000" stroke-width="2.6" fill="none"/></svg>
<svg class="a" style="left:511px;top:446px" width="13" height="13" viewBox="0 0 13 13"><rect x="0.5" y="0.5" width="12" height="12" fill="#fff" stroke="#8a8a8a"/></svg>
<svg class="a" style="left:511px;top:466px" width="13" height="13" viewBox="0 0 13 13"><rect x="0.5" y="0.5" width="12" height="12" fill="#fff" stroke="#8a8a8a"/></svg>
<svg class="a" style="left:511px;top:486px" width="13" height="13" viewBox="0 0 13 13"><rect x="0.5" y="0.5" width="12" height="12" fill="#fff" stroke="#8a8a8a"/></svg>
<svg class="a" style="left:511px;top:506px" width="13" height="13" viewBox="0 0 13 13"><rect x="0.5" y="0.5" width="12" height="12" fill="#fff" stroke="#8a8a8a"/></svg>
<div class="det" style="left:548px;top:363px;width:49px;height:19px"></div>
<div class="t" style="left:555.36px;top:365.59px;font-size:15.6px;line-height:15.6px;color:#f070d0;transform:scaleX(0.8411);transform-origin:0 0;">Detail</div>
<div class="det" style="left:548px;top:463px;width:49px;height:19px"></div>
<div class="t" style="left:555.36px;top:465.59px;font-size:15.6px;line-height:15.6px;color:#8a8a8a;transform:scaleX(0.8411);transform-origin:0 0;">Detail</div>
<div class="det" style="left:548px;top:483px;width:49px;height:19px"></div>
<div class="t" style="left:555.36px;top:485.59px;font-size:15.6px;line-height:15.6px;color:#8a8a8a;transform:scaleX(0.8411);transform-origin:0 0;">Detail</div>
<div class="t" style="left:24.50px;top:530.00px;font-size:16.3px;line-height:16.3px;color:#1c1c1c;transform:scaleX(0.9558);transform-origin:0 0;-webkit-text-stroke:0;">Clear the device ranges set in the Device/Label Automatic-Assign setting to 0 at time of PLC write</div>
<div class="t" style="left:81.16px;top:551.74px;font-size:15.6px;line-height:15.6px;color:#000;transform:scaleX(0.8363);transform-origin:0 0;">Necessary Setting(</div>
<div class="t" style="left:201.16px;top:551.74px;font-size:15.6px;line-height:15.6px;color:#ee2020;transform:scaleX(0.8434);transform-origin:0 0;">No Setting</div>
<div class="t" style="left:267.50px;top:551.74px;font-size:15.6px;line-height:15.6px;color:#222;-webkit-text-stroke:0;">/</div>
<div class="t" style="left:293.75px;top:551.74px;font-size:15.6px;line-height:15.6px;color:#2a2ad8;transform:scaleX(0.8120);transform-origin:0 0;">Already Set</div>
<div class="t" style="left:371.75px;top:551.74px;font-size:15.6px;line-height:15.6px;color:#000;transform:scaleX(0.8000);transform-origin:0 0;">)</div>
<div class="t" style="left:410.00px;top:551.74px;font-size:15.6px;line-height:15.6px;color:#000;transform:scaleX(0.8358);transform-origin:0 0;">Set if it is needed(</div>
<div class="t" style="left:521.64px;top:551.74px;font-size:15.6px;line-height:15.6px;color:#f070c8;transform:scaleX(0.8574);transform-origin:0 0;">No Setting</div>
<div class="t" style="left:590.50px;top:551.74px;font-size:15.6px;line-height:15.6px;color:#222;-webkit-text-stroke:0;">/</div>
<div class="t" style="left:612.50px;top:551.74px;font-size:15.6px;line-height:15.6px;color:#2a2ad8;transform:scaleX(0.8120);transform-origin:0 0;">Already Set</div>
<div class="t" style="left:690.50px;top:551.74px;font-size:15.6px;line-height:15.6px;color:#000;transform:scaleX(0.8000);transform-origin:0 0;">)</div>
<div class="t" style="left:39.40px;top:580.99px;font-size:15.6px;line-height:15.6px;color:#000;transform:scaleX(0.8269);transform-origin:0 0;">Writing Size</div>
<div class="t" style="left:109.60px;top:599.99px;font-size:15.6px;line-height:15.6px;color:#000;transform:scaleX(0.8360);transform-origin:0 0;">9,520Bytes</div>
<div class="a" style="left:38px;top:615px;width:113px;height:2px;background:#10e010"></div>
<div class="a" style="left:180px;top:596px;width:411px;height:21px;background:#fff;border-top:1px solid #8a8a8a;border-left:1px solid #8a8a8a;border-right:1px solid #fff;border-bottom:1px solid #e8e8e8;box-shadow:inset 1px 1px 0 #6a6a6a"></div>
<div class="a" style="left:182px;top:603px;width:31px;height:10px;background:#00e800"></div>
<div class="a" style="left:530px;top:598px;width:59px;height:18px;background:#0000ee"></div>
<div class="t" style="left:594.78px;top:581.19px;font-size:15.6px;line-height:15.6px;color:#000;transform:scaleX(0.8232);transform-origin:0 0;">Free Volume</div>
<div class="a" style="left:595px;top:616px;width:112px;height:1px;background:#fff"></div>
<div class="t" style="left:661.00px;top:599.79px;font-size:15.6px;line-height:15.6px;color:#000;transform:scaleX(0.7990);transform-origin:0 0;">104,800</div>
<div class="t" style="left:717.95px;top:581.39px;font-size:15.6px;line-height:15.6px;color:#000;transform:scaleX(0.8458);transform-origin:0 0;">Use Volume</div>
<div class="t" style="left:774.77px;top:599.99px;font-size:15.6px;line-height:15.6px;color:#000;transform:scaleX(0.8347);transform-origin:0 0;">18,080Bytes</div>
<div class="a" style="left:711px;top:615px;width:137px;height:2px;background:#1010cc"></div>
<div class="btn" style="left:857px;top:592px;width:151px;height:28px"></div>
<div class="t" style="left:906.06px;top:599.49px;font-size:15.6px;line-height:15.6px;color:#000;transform:scaleX(0.9447);transform-origin:0 0;">Refresh</div>
<div class="btn" style="left:15px;top:651px;width:144px;height:25px"></div>
<div class="t" style="left:20.61px;top:655.69px;font-size:15.6px;line-height:15.6px;color:#000;transform:scaleX(0.8929);transform-origin:0 0;">Related Functions&lt;&lt;</div>
<div class="circ" style="left:780px;top:643px"></div>
<div class="t" style="left:791.20px;top:650.88px;font-size:24px;line-height:24px;color:#111;-webkit-text-stroke:0;">3</div>
<div class="a" style="left:815px;top:649px;width:111px;height:29px;border:2px solid #f39c1f;border-radius:3px"></div>
<div class="btn" style="left:817px;top:651px;width:107px;height:25px"></div>
<div class="t" style="left:845.62px;top:654.79px;font-size:15.6px;line-height:15.6px;color:#000;transform:scaleX(0.8780);transform-origin:0 0;">Execute</div>
<div class="btn" style="left:931px;top:648px;width:97px;height:28px"></div>
<div class="t" style="left:962.50px;top:654.79px;font-size:15.6px;line-height:15.6px;color:#000;transform:scaleX(0.8164);transform-origin:0 0;">Close</div>
<div class="a" style="left:10px;top:687px;width:1023px;height:147px;background:#fff;border-top:1px solid #a0a0a0;border-left:1px solid #a0a0a0;border-right:1px solid #fff;border-bottom:1px solid #fff;box-shadow:inset 1px 1px 0 #696969,inset -1px -1px 0 #e3e3e3"></div>
<div class="a" style="left:14px;top:757px;width:115px;height:18px;background:#e8e8e8"></div>
<div class="t" style="left:14.63px;top:759.19px;font-size:15.6px;line-height:15.6px;color:#000;transform:scaleX(0.8708);transform-origin:0 0;">Remote Operation</div>
<div class="t" style="left:160.50px;top:759.19px;font-size:15.6px;line-height:15.6px;color:#000;transform:scaleX(0.8217);transform-origin:0 0;">Set Clock</div>
<div class="t" style="left:261.67px;top:759.19px;font-size:15.6px;line-height:15.6px;color:#000;transform:scaleX(0.8283);transform-origin:0 0;">PLC User Data</div>
<div class="t" style="left:393.00px;top:759.19px;font-size:15.6px;line-height:15.6px;color:#000;transform:scaleX(0.8843);transform-origin:0 0;">Write Title</div>
<div class="t" style="left:506.18px;top:759.19px;font-size:15.6px;line-height:15.6px;color:#000;transform:scaleX(0.8213);transform-origin:0 0;">Format PLC</div>
<div class="t" style="left:515.14px;top:774.69px;font-size:15.6px;line-height:15.6px;color:#000;transform:scaleX(0.8592);transform-origin:0 0;">Memory</div>
<div class="t" style="left:604.50px;top:759.19px;font-size:15.6px;line-height:15.6px;color:#000;transform:scaleX(0.8096);transform-origin:0 0;">Clear PLC Memory</div>
<div class="t" style="left:738.00px;top:759.19px;font-size:15.6px;line-height:15.6px;color:#000;transform:scaleX(0.8289);transform-origin:0 0;">Arrange PLC</div>
<div class="t" style="left:750.14px;top:774.69px;font-size:15.6px;line-height:15.6px;color:#000;transform:scaleX(0.8646);transform-origin:0 0;">Memory</div>
<div class="t" style="left:842.00px;top:759.19px;font-size:15.6px;line-height:15.6px;color:#000;transform:scaleX(0.8597);transform-origin:0 0;">Soft Security Key</div>
<div class="t" style="left:852.84px;top:774.69px;font-size:15.6px;line-height:15.6px;color:#000;transform:scaleX(0.8634);transform-origin:0 0;">Management</div>
<svg class="a" style="left:47px;top:283px" width="20" height="18" viewBox="0 0 20 18"><defs><linearGradient id="rg" x1="0" y1="0" x2="1" y2="1"><stop offset="0" stop-color="#ff6a6a"/><stop offset="0.5" stop-color="#ee1c1c"/><stop offset="1" stop-color="#c00000"/></linearGradient></defs>
<rect x="0" y="0" width="20" height="18" fill="url(#rg)"/>
<path d="M2 5.5h7M8.5 3v11M8.5 9.5h3M11.5 3v11M14 3v11M14 5.5h4.5M14 12.5h4.5M2 12.5h0" stroke="#fff" stroke-width="1.6" fill="none"/></svg>
<svg class="a" style="left:64px;top:303px" width="19" height="19" viewBox="0 0 19 19"><path d="M0.5 6h3v12.5h-3z" fill="#f0b840"/>
<path d="M2.5 0.5h9l3 1.5l3.5 4v12h-15.5z" fill="#7a8498"/>
<path d="M3.5 1h8v10h-8z" fill="#e4e8ee"/><path d="M5.5 1.5v9" stroke="#b8c0c8" stroke-width="1"/>
<path d="M8 3h4v5h-4z" fill="#f8f8fc"/>
<path d="M3 10h14.5v7.5h-14.5z" fill="#e6dc9c"/>
<path d="M3 13h14" stroke="#d8c880" stroke-width="1"/>
<path d="M0.5 17.5h17.5v1h-17.5z" fill="#c09030"/></svg>
<svg class="a" style="left:64px;top:343px" width="19" height="19" viewBox="0 0 19 19"><path d="M0.5 6h3v12.5h-3z" fill="#f0b840"/>
<path d="M2.5 0.5h9l3 1.5l3.5 4v12h-15.5z" fill="#7a8498"/>
<path d="M3.5 1h8v10h-8z" fill="#e4e8ee"/><path d="M5.5 1.5v9" stroke="#b8c0c8" stroke-width="1"/>
<path d="M8 3h4v5h-4z" fill="#f8f8fc"/>
<path d="M3 10h14.5v7.5h-14.5z" fill="#e6dc9c"/>
<path d="M3 13h14" stroke="#d8c880" stroke-width="1"/>
<path d="M0.5 17.5h17.5v1h-17.5z" fill="#c09030"/></svg>
<svg class="a" style="left:80px;top:443px" width="19" height="19" viewBox="0 0 19 19"><path d="M0.5 6h3v12.5h-3z" fill="#f0b840"/>
<path d="M2.5 0.5h9l3 1.5l3.5 4v12h-15.5z" fill="#7a8498"/>
<path d="M3.5 1h8v10h-8z" fill="#e4e8ee"/><path d="M5.5 1.5v9" stroke="#b8c0c8" stroke-width="1"/>
<path d="M8 3h4v5h-4z" fill="#f8f8fc"/>
<path d="M3 10h14.5v7.5h-14.5z" fill="#e6dc9c"/>
<path d="M3 13h14" stroke="#d8c880" stroke-width="1"/>
<path d="M0.5 17.5h17.5v1h-17.5z" fill="#c09030"/></svg>
<svg class="a" style="left:80px;top:323px" width="20" height="19" viewBox="0 0 20 19"><rect x="0" y="0" width="20" height="19" fill="#ee2424"/>
<path d="M1 5h7M7.5 1.5v8M12.5 1.5v8M12.5 5h7" stroke="#fff" stroke-width="1.6" fill="none"/>
<text x="10" y="18" font-family="Liberation Sans" font-weight="bold" font-size="7.5" fill="#fff" text-anchor="middle" letter-spacing="-0.3">GXLR</text></svg>
<svg class="a" style="left:80px;top:366px" width="19" height="16" viewBox="0 0 19 16"><path d="M0.5 4h6l-1 12h-5z" fill="#e0b040"/>
<path d="M1 13h18v3h-18z" fill="#d0a030"/>
<path d="M6 0.5h12v9h-12z" fill="#9ff0ff" stroke="#6a7a8a" stroke-width="1"/>
<path d="M5 9.5h14v4.5h-14z" fill="#333a40"/>
<path d="M2 3l8 9" stroke="#20a040" stroke-width="3.2"/>
<path d="M9 11l2 2" stroke="#e8d0a0" stroke-width="2"/></svg>
<svg class="a" style="left:96px;top:383px" width="20" height="18" viewBox="0 0 20 18"><path d="M1 8h9v10h-9z" fill="#4a4a4a"/><path d="M2 13h7v2h-7z" fill="#c8c8c8"/>
<path d="M8 1h8l3 3v12h-11z" fill="#e8e8f0" stroke="#5a6478" stroke-width="1"/>
<path d="M10 4l3 4l-3 4zM13 4l3 4l-3 4z" fill="#e02020"/>
<path d="M1 6l4-4v2.5h5v3h-5v2.5z" fill="#10b030"/></svg>
<svg class="a" style="left:80px;top:404px" width="19" height="17" viewBox="0 0 19 17"><path d="M0.5 3h18v13h-18z" fill="#e8c040" rx="2"/>
<path d="M3 2h10v10h-10z" fill="#3a3a3a"/><path d="M4 5h8v2h-8z" fill="#c0a0a0"/>
<path d="M5 15l9-10" stroke="#1040b0" stroke-width="3"/>
<path d="M13 1.5a3 3 0 1 0 5 3" stroke="#1040b0" stroke-width="2.2" fill="none"/></svg>
<svg class="a" style="left:96px;top:424px" width="20" height="18" viewBox="0 0 20 18"><circle cx="6" cy="12" r="5" fill="#a8c8f0"/><circle cx="6" cy="12" r="2.5" fill="#e0f0ff"/>
<path d="M7 1h8v12h-8z" fill="#3a3a3a"/><path d="M9 3h3v2h-3z" fill="#60a060"/>
<path d="M7 17l9-10" stroke="#1040b0" stroke-width="3"/>
<path d="M15 3.5a3 3 0 1 0 5 3" stroke="#1040b0" stroke-width="2.2" fill="none"/></svg>
<svg class="a" style="left:96px;top:463px" width="20" height="19" viewBox="0 0 20 19"><circle cx="10" cy="9" r="8.5" fill="#2a8ad8"/>
<path d="M3 5a8.5 8.5 0 0 1 15 2l-3 3" stroke="#30b040" stroke-width="3.5" fill="none"/>
<path d="M7 7h8v11h-8z" fill="#e8e8f0" stroke="#7a8090" stroke-width="1"/>
<path d="M9 10h4M9 12.5h4M9 15h3" stroke="#c06060" stroke-width="1"/>
<path d="M12 16l6-6" stroke="#40a040" stroke-width="2.5"/></svg>
<svg class="a" style="left:80px;top:483px" width="19" height="19" viewBox="0 0 19 19"><path d="M0.5 5h18v13h-18z" fill="#e8c040"/>
<path d="M4 1h14v17h-14z" fill="#4a4a4a"/>
<circle cx="11" cy="10.5" r="6" fill="#2a8ad8"/><path d="M11 4.5a6 6 0 0 1 6 6h-6z" fill="#ee4020"/><path d="M5 11a6 6 0 0 0 12 0z" fill="#30c030"/>
<path d="M7 0h2v2h-2zM13 0h2v2h-2z" fill="#333"/></svg>
<svg class="a" style="left:96px;top:503px" width="20" height="19" viewBox="0 0 20 19"><path d="M4 1h16v15h-16z" fill="#4a4a4a"/><path d="M5 3h14v3h-14z" fill="#111"/>
<path d="M9 7h5v6h-5z" fill="#ee4020"/><path d="M14 7h5v6h-5z" fill="#f0f0f8"/>
<circle cx="7" cy="14" r="5" fill="#3a8ae0"/><path d="M3 15a5 5 0 0 0 9 0z" fill="#30c030"/><path d="M7 9a5 5 0 0 1 5 5h-5z" fill="#ee4020"/>
<path d="M7 0h2v2h-2zM15 0h2v2h-2z" fill="#333"/></svg>
<svg class="a" style="left:0;top:0" width="1040" height="843" viewBox="0 0 1040 843"><path d="M71 703L76 699.25H89L84 703Z" fill="#7a0a0a"/><path d="M84 703L89 699.25H98.5L93.5 703Z" fill="#111"/><path d="M93.5 703L98.5 699.25V726.5L93.5 731.5Z" fill="#0a0a0a"/><rect x="71" y="703" width="13" height="28.5" fill="#ee1111"/><rect x="71" y="703" width="13" height="10" fill="#0a0a0a"/><rect x="79.06" y="713" width="4.94" height="18.5" fill="#000" opacity="0.18"/><rect x="84" y="703" width="9.5" height="28.5" fill="#b8b8b8"/><rect x="84" y="703" width="1" height="28.5" fill="#fff" opacity="0.7"/><rect x="86" y="719" width="7" height="2" fill="#333"/><rect x="86" y="724" width="7" height="2" fill="#333"/><rect x="88" y="705" width="3" height="3" fill="#20c040"/><path d="M61 738.5H76.5L78.5 736V731" stroke="#0a8a1a" stroke-width="3" fill="none"/><path d="M43.5 728h17.5v16h-17.5z" fill="#9a9a9a"/><path d="M43.5 728h17.5v2h-17.5z" fill="#c8c8c8"/><path d="M43.5 735h17.5v9h-17.5z" fill="#111"/><path d="M44.5 743l5-7M51 743l5-7M57 743l3.5-5" stroke="#e8e030" stroke-width="2.2"/><path d="M49 733l3.5-3l3.5 3z" fill="#222"/><rect x="51.5" y="724" width="2" height="7" fill="#555"/><circle cx="52.5" cy="721.5" r="5" fill="#dd1a1a"/><circle cx="51" cy="720" r="1.8" fill="#ff9a9a"/><path d="M167.5 703L175.5 697.0H198.0L190.0 703Z" fill="#7a0a0a"/><path d="M190.0 703L198.0 697.0H210.0L202.0 703Z" fill="#111"/><path d="M202.0 703L210.0 697.0V737L202.0 745Z" fill="#0a0a0a"/><rect x="167.5" y="703" width="22.5" height="42" fill="#ee1111"/><rect x="167.5" y="703" width="22.5" height="10" fill="#0a0a0a"/><rect x="181.45" y="713" width="8.55" height="32" fill="#000" opacity="0.18"/><rect x="190.0" y="703" width="12" height="42" fill="#a8a8a8"/><rect x="190.0" y="703" width="1" height="42" fill="#fff" opacity="0.7"/><circle cx="187" cy="707" r="1.5" fill="#30d040"/><rect x="198" y="708" width="3" height="5" fill="#20a030"/><rect x="176.5" y="728.5" width="33" height="12" fill="#050505" stroke="#e0e020" stroke-width="1.5"/><text x="193" y="739.3" font-family="Liberation Sans" font-size="12" fill="#20d020" text-anchor="middle" letter-spacing="0.3">8:00</text><path d="M283.5 704L291.5 698.0H314.5L306.5 704Z" fill="#7a0a0a"/><path d="M306.5 704L314.5 698.0H328.0L320.0 704Z" fill="#111"/><path d="M320.0 704L328.0 698.0V739L320.0 747Z" fill="#0a0a0a"/><rect x="283.5" y="704" width="23" height="43" fill="#ee1111"/><rect x="283.5" y="704" width="23" height="10" fill="#0a0a0a"/><rect x="297.76" y="714" width="8.74" height="33" fill="#000" opacity="0.18"/><rect x="306.5" y="704" width="13.5" height="43" fill="#a0a0a0"/><rect x="306.5" y="704" width="1" height="43" fill="#fff" opacity="0.7"/><rect x="307" y="735" width="13" height="2" fill="#333"/><rect x="307" y="740" width="13" height="2" fill="#333"/><rect x="296.5" y="705" width="17" height="17.5" fill="#fff" stroke="#222" stroke-width="1"/><path d="M300 714h5l2-3" stroke="#20a030" stroke-width="2" fill="none"/><rect x="300" y="712" width="3" height="4" fill="#d02020"/><rect x="309" y="698" width="17" height="18" fill="#fff" stroke="#222" stroke-width="1"/><rect x="312" y="700.5" width="10" height="11" fill="#fff" stroke="#2020d0" stroke-width="1.6"/><path d="M314 704h6M314 706.5h6M314 709h6" stroke="#2020d0" stroke-width="1"/><path d="M403 710L409 705.5H427L421 710Z" fill="#7a0a0a"/><path d="M421 710L427 705.5H438L432 710Z" fill="#111"/><path d="M432 710L438 705.5V738L432 744Z" fill="#0a0a0a"/><rect x="403" y="710" width="18" height="34" fill="#ee1111"/><rect x="403" y="710" width="18" height="10" fill="#0a0a0a"/><rect x="414.16" y="720" width="6.84" height="24" fill="#000" opacity="0.18"/><rect x="421" y="710" width="11" height="34" fill="#a8a8a8"/><rect x="421" y="710" width="1" height="34" fill="#fff" opacity="0.7"/><rect x="421" y="731" width="11" height="2" fill="#222"/><rect x="425" y="735" width="2" height="8" fill="#222"/><rect x="421" y="737" width="11" height="1.5" fill="#222"/><rect x="411.5" y="708" width="31.5" height="12" fill="#fff" stroke="#1a1a50" stroke-width="1"/><rect x="412" y="708.5" width="30.5" height="3.5" fill="#1010e0"/><path d="M417 715L430 701" stroke="#10901a" stroke-width="4.5"/><path d="M415.5 716.5l2.5-3" stroke="#222" stroke-width="2"/><path d="M517 699L525 693.0H547.5L539.5 699Z" fill="#383a10"/><path d="M539.5 699L547.5 693.0H561.5L553.5 699Z" fill="#111"/><path d="M553.5 699L561.5 693.0V733.5L553.5 741.5Z" fill="#0a0a0a"/><rect x="517" y="699" width="22.5" height="42.5" fill="#10707a"/><rect x="517" y="699" width="22.5" height="10" fill="#0a0a0a"/><rect x="530.95" y="709" width="8.55" height="32.5" fill="#000" opacity="0.18"/><rect x="539.5" y="699" width="14" height="42.5" fill="#d8f0d8"/><rect x="539.5" y="699" width="1" height="42.5" fill="#fff" opacity="0.7"/><rect x="547" y="705" width="3" height="5" fill="#203080"/><path d="M556 741L565 750" stroke="#8a4a10" stroke-width="3.5"/><circle cx="543" cy="730" r="12.5" fill="#0a0a0a" stroke="#0a4a1a" stroke-width="3.2"/><path d="M531 733a12 12 0 0 0 24 0z" fill="#10907a"/><path d="M543 740l8-10" stroke="#e0e0c0" stroke-width="2.5"/><path d="M536 726h6M535 729h4" stroke="#fff" stroke-width="1"/><path d="M672 699L680 693V735L672 741Z" fill="#0a0a0a"/><path d="M664 699L672 693H680L672 699Z" fill="#222"/><rect x="659" y="701" width="13" height="17" fill="#f8a888"/><rect x="659" y="701" width="1" height="17" fill="#fff"/><rect x="635" y="716" width="24" height="25" fill="#f04818"/><path d="M636 706h4v4h-4zM643 709h5v5h-5zM650 712h4v4h-4zM640 714h3v3h-3zM653 706h3v3h-3z" fill="#f04818"/><rect x="637" y="697" width="1.6" height="1.6" fill="#222"/><rect x="642" y="700" width="1.6" height="1.6" fill="#222"/><rect x="648" y="696" width="1.6" height="1.6" fill="#222"/><rect x="652" y="703" width="1.6" height="1.6" fill="#222"/><rect x="639" y="704" width="1.6" height="1.6" fill="#222"/><rect x="645" y="705" width="1.6" height="1.6" fill="#222"/><rect x="650" y="699" width="1.6" height="1.6" fill="#222"/><rect x="656" y="695" width="1.6" height="1.6" fill="#222"/><rect x="662" y="694" width="1.6" height="1.6" fill="#222"/><rect x="667" y="697" width="1.6" height="1.6" fill="#222"/><rect x="658" y="699" width="1.6" height="1.6" fill="#222"/><rect x="644" y="694" width="1.6" height="1.6" fill="#222"/><rect x="634" y="699" width="1.6" height="1.6" fill="#222"/><rect x="636" y="718" width="2.5" height="2.5" fill="#fff"/><rect x="641" y="722" width="2.5" height="2.5" fill="#fff"/><rect x="646" y="728" width="2.5" height="2.5" fill="#fff"/><rect x="638" y="733" width="2.5" height="2.5" fill="#fff"/><rect x="644" y="737" width="2.5" height="2.5" fill="#fff"/><rect x="652" y="719" width="2.5" height="2.5" fill="#fff"/><rect x="637" y="727" width="2.5" height="2.5" fill="#fff"/><rect x="649" y="724" width="2.5" height="2.5" fill="#fff"/><rect x="642" y="730" width="2.5" height="2.5" fill="#fff"/><path d="M674 741L683 750" stroke="#e04010" stroke-width="3.5"/><circle cx="660" cy="730" r="12.5" fill="#0a0a0a" stroke="#0a0aa0" stroke-width="3.2"/><path d="M648 733a12 12 0 0 0 24 0z" fill="#10a07a"/><path d="M660 740l8-10" stroke="#f0b0b0" stroke-width="2.5"/><path d="M653 726h6M652 729h4" stroke="#fff" stroke-width="1"/><path d="M751 699L759 693.0H781L773 699Z" fill="#7a0a0a"/><path d="M773 699L781 693.0H794L786 699Z" fill="#111"/><path d="M786 699L794 693.0V733.5L786 741.5Z" fill="#0a0a0a"/><rect x="751" y="699" width="22" height="42.5" fill="#ee1111"/><rect x="751" y="699" width="22" height="10" fill="#0a0a0a"/><rect x="764.64" y="709" width="8.36" height="32.5" fill="#000" opacity="0.18"/><rect x="773" y="699" width="13" height="42.5" fill="#a8a8a8"/><rect x="773" y="699" width="1" height="42.5" fill="#fff" opacity="0.7"/><circle cx="771" cy="703" r="1.5" fill="#30d040"/><rect x="781" y="705" width="3" height="5" fill="#20a030"/><path d="M790 741L799 750" stroke="#c05010" stroke-width="3.5"/><circle cx="777" cy="728" r="12.5" fill="#0a0a0a" stroke="#0a0aa0" stroke-width="3.2"/><path d="M765 731a12 12 0 0 0 24 0z" fill="#10a07a"/><path d="M777 738l8-10" stroke="#e0e0c0" stroke-width="2.5"/><path d="M770 724h6M769 727h4" stroke="#fff" stroke-width="1"/><path d="M871 703L879 697.0H901.5L893.5 703Z" fill="#7a0a0a"/><path d="M893.5 703L901.5 697.0H914.5L906.5 703Z" fill="#111"/><path d="M906.5 703L914.5 697.0V738L906.5 746Z" fill="#0a0a0a"/><rect x="871" y="703" width="22.5" height="43" fill="#ee1111"/><rect x="871" y="703" width="22.5" height="10" fill="#0a0a0a"/><rect x="884.95" y="713" width="8.55" height="33" fill="#000" opacity="0.18"/><rect x="893.5" y="703" width="13" height="43" fill="#a0a0a0"/><rect x="893.5" y="703" width="1" height="43" fill="#fff" opacity="0.7"/><circle cx="889.5" cy="707.5" r="1.5" fill="#30d040"/><rect x="895" y="733" width="12" height="2" fill="#222"/><rect x="895" y="738" width="12" height="2" fill="#222"/><rect x="894.5" y="707" width="18.5" height="14" fill="#f8d020"/><path d="M894.5 714l6-5l6 6l6-4v10h-18.5z" fill="#f8a020" opacity="0.6"/><path d="M898 707v-4h12v4" stroke="#b8b8b8" stroke-width="2.5" fill="none"/><circle cx="903.5" cy="712" r="2.3" fill="#222"/><rect x="902.5" y="712" width="2" height="6" fill="#222"/></svg>
</body></html>
